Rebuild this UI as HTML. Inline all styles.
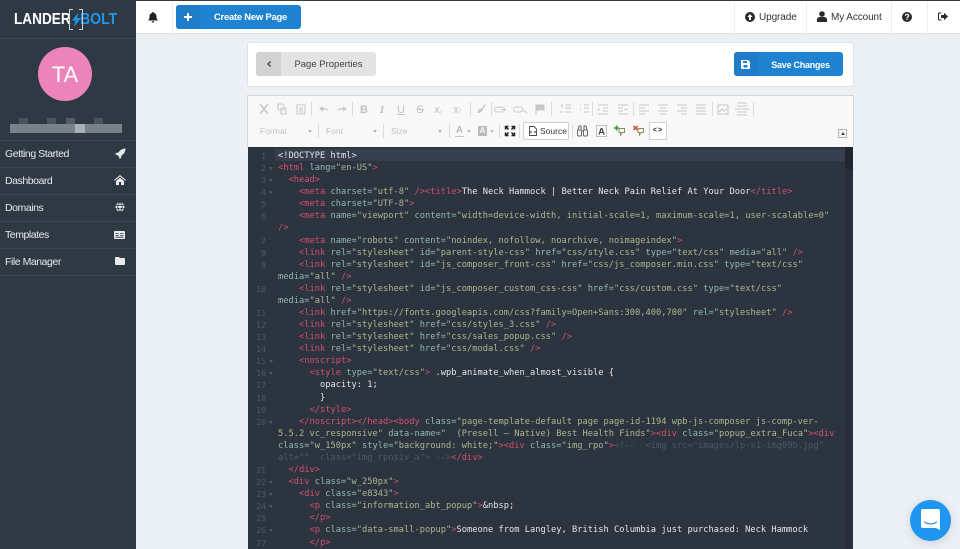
<!DOCTYPE html>
<html lang="en"><head><meta charset="utf-8"><title>Page Editor</title>
<style>
*{box-sizing:border-box}
html,body{margin:0;padding:0;width:960px;height:549px;overflow:hidden;background:#ebf0f5;font-family:"Liberation Sans",sans-serif}
#side{position:absolute;left:0;top:0;width:136px;height:549px;background:#2f3944}
.ln{position:absolute;left:0;width:136px;height:1px;background:#3a4551}
.mi{position:absolute;left:5px;color:#e6e9ec;font-size:10.5px;letter-spacing:-.45px;line-height:12px;white-space:nowrap}
.blur{position:absolute;height:9px;background:#8c939a}
#top{position:absolute;left:136px;top:0;width:824px;height:34px;background:#fff;border-top:1px solid #3a3a3a;border-bottom:1px solid #dfe3e7}
.vs{position:absolute;top:1px;width:1px;height:32px;background:#eceff2}
.tt{position:absolute;font-size:10px;line-height:12px;color:#333;white-space:nowrap;letter-spacing:-.1px}
.btn{position:absolute;border-radius:3px;background:#2083d2;color:#fff;font-weight:bold;font-size:9.5px;height:24px;line-height:24px;text-align:center}
svg{position:absolute;overflow:visible}
#panel{position:absolute;left:247px;top:42px;width:607px;height:45px;background:#fff;border:1px solid #dfe3e7;border-radius:3px}
#tb{position:absolute;left:247px;top:95px;width:607px;height:52px;background:#f8f8f8;border:1px solid #d4d6d8;border-bottom:0}
.sep{position:absolute;width:1px;height:14px;background:#dcdcdc}
.gi{position:absolute;top:103px;color:#c0c0c0;font-size:11px;line-height:14px;width:14px;text-align:center;font-weight:bold}
.dd{position:absolute;top:125px;color:#c2c2c2;font-size:8.5px;line-height:12px}
.ar{position:absolute;top:130px;width:0;height:0;border:2.5px solid transparent;border-top:3px solid #b8b8b8}
#code{position:absolute;left:248px;top:147px;width:605px;height:402px;background:#2c3440;overflow:hidden}
#act{position:absolute;left:27px;top:2px;width:570px;height:12px;background:#373f4e}
#sb{position:absolute;right:0;top:0;width:8px;height:402px;background:#282e39}
#sbt{position:absolute;right:0;top:0;width:8px;height:22px;background:#20252e}
#cl{position:absolute;left:30px;top:3px;width:570px;font-family:"DejaVu Sans Mono",monospace;font-size:8.72px;color:#e4e6e8}
#cl div{height:12.09px;line-height:12.09px;white-space:pre}
#gn{position:absolute;left:0;top:3px;width:26px;font-family:"DejaVu Sans Mono",monospace;font-size:8.2px;color:#4e5967}
#gn div{height:12.09px;line-height:12.09px;white-space:pre;position:relative;padding-left:4px;width:18px;text-align:right}
.f:after{content:"";position:absolute;left:21px;top:5px;border:2px solid transparent;border-top:3px solid #4e5967}
.t{color:#d2506c}.a{color:#93b8b4}.s{color:#a9b98c}.c{color:#4d5866}
#chat{position:absolute;left:910px;top:500px;width:41px;height:41px;border-radius:50%;background:#2196f0;box-shadow:0 2px 10px rgba(0,0,0,.12)}
</style></head><body>
<div id="side">
 <div style="position:absolute;left:14px;top:12px;font-size:16px;font-weight:bold;color:#fff;line-height:16px;white-space:nowrap;transform:scaleX(.85);transform-origin:left">LANDER</div>
 <div style="position:absolute;left:80px;top:12px;font-size:16px;font-weight:bold;color:#2196e8;line-height:16px;white-space:nowrap;transform:scaleX(.88);transform-origin:left">BOLT</div>
 <svg style="left:69px;top:9px" width="14" height="21" viewBox="0 0 14 21"><path d="M4 .5H.5V20.500H4M10 .5H13.500V20.500H10" fill="none" stroke="#cfd3d7" stroke-width="1"/><path d="M10 3 3 11.500H6.500L5 18 12 9H8Z" fill="#2196e8"/></svg>
 <div class="ln" style="top:38px"></div>
 <div style="position:absolute;left:38px;top:47px;width:54px;height:54px;border-radius:50%;background:#ec84bb;color:#fff;font-size:22px;line-height:55px;text-align:center">TA</div>
 <div class="blur" style="left:10px;top:124px;width:112px;background:#79818a"></div>
 <div class="blur" style="left:19px;top:118px;width:9px;height:6px;background:#4a545e"></div>
 <div class="blur" style="left:47px;top:118px;width:9px;height:6px;background:#4a545e"></div>
 <div class="blur" style="left:66px;top:118px;width:9px;height:6px;background:#545e68"></div>
 <div class="blur" style="left:94px;top:118px;width:9px;height:6px;background:#4a545e"></div>
 <div class="blur" style="left:75px;top:124px;width:10px;background:#a9afb4"></div>
 <div class="ln" style="top:140px"></div>
 <div class="ln" style="top:167px"></div><div class="ln" style="top:194px"></div><div class="ln" style="top:221px"></div><div class="ln" style="top:248px"></div><div class="ln" style="top:275px"></div>
 <div class="mi" style="top:148px">Getting Started</div>
 <div class="mi" style="top:175px">Dashboard</div>
 <div class="mi" style="top:202px">Domains</div>
 <div class="mi" style="top:229px">Templates</div>
 <div class="mi" style="top:256px">File Manager</div>
 <svg style="left:115px;top:148px" width="11" height="11" viewBox="0 0 11 11"><path d="M10.500.5C7 .7 5 2 3.500 4.500L1 5l-1 1.500 2 .3 2.200 2.200.3 2L6 10l.5-2.500C9 6 10.300 4 10.500.5Z" fill="#e6e9ec"/></svg>
 <svg style="left:114px;top:175px" width="12" height="10" viewBox="0 0 12 10"><path d="M6 0 0 5l.7.8L6 1.500l5.300 4.300.7-.8ZM2 6v4h3V7h2v3h3V6L6 2.700Z" fill="#e6e9ec"/></svg>
 <svg style="left:115px;top:202px" width="10" height="10" viewBox="0 0 10 10"><circle cx="5" cy="5" r="4.500" fill="#e6e9ec"/><path d="M.5 3.500h9M.5 6.500h9M5 .5c-3 2.500-3 6.500 0 9M5 .5c3 2.500 3 6.500 0 9" stroke="#2f3944" stroke-width=".8" fill="none"/></svg>
 <svg style="left:114px;top:231px" width="11" height="8" viewBox="0 0 11 8"><rect width="11" height="8" rx="1" fill="#e6e9ec"/><path d="M1.500 2.500h3M6 2.500h3.500M1.500 4.500h3M6 4.500h3.500M1.500 6.200h8" stroke="#2f3944" stroke-width=".8"/></svg>
 <svg style="left:115px;top:257px" width="10" height="8" viewBox="0 0 10 8"><path d="M0 1q0-1 1-1h3l1 1h4q1 0 1 1v5q0 1-1 1H1Q0 8 0 7Z" fill="#e6e9ec"/></svg>
</div>

<div id="top">
 <div class="vs" style="left:36px"></div>
 <div class="vs" style="left:598px"></div><div class="vs" style="left:670px"></div><div class="vs" style="left:755px"></div><div class="vs" style="left:791px"></div>
 <svg style="left:12px;top:11px" width="10" height="11" viewBox="0 0 10 11"><path d="M5 0a1 1 0 0 1 1 1c2 .5 2.500 2 2.500 4 0 1.500.5 2.500 1.500 3.500H0C1 7.500 1.500 6.500 1.500 5c0-2 .5-3.500 2.500-4a1 1 0 0 1 1-1ZM3.700 9.300h2.600A1.300 1.300 0 0 1 3.700 9.300Z" fill="#222"/></svg>
 <svg style="left:609px;top:11px" width="10" height="10" viewBox="0 0 10 10"><circle cx="5" cy="5" r="5" fill="#2a2a2a"/><path d="M5 2 2.300 5H4v3h2V5h1.700Z" fill="#fff"/></svg>
 <div class="tt" style="left:623px;top:11px">Upgrade</div>
 <svg style="left:681px;top:10px" width="10" height="11" viewBox="0 0 10 11"><circle cx="5" cy="3" r="2.800" fill="#2a2a2a"/><path d="M0 11V8.500C0 7 1.500 6 3 6h4c1.500 0 3 1 3 2.500V11Z" fill="#2a2a2a"/></svg>
 <div class="tt" style="left:695px;top:11px">My Account</div>
 <svg style="left:766px;top:11px" width="10" height="10" viewBox="0 0 10 10"><circle cx="5" cy="5" r="5" fill="#2a2a2a"/><path d="M3.400 3.800C3.500 2.800 4.200 2.300 5 2.300c1 0 1.700.6 1.700 1.400C6.700 5 5 5 5 6.200" fill="none" stroke="#fff" stroke-width="1.200"/><rect x="4.400" y="6.800" width="1.200" height="1.200" fill="#fff"/></svg>
 <svg style="left:802px;top:11px" width="10" height="9" viewBox="0 0 10 9"><path d="M3.500 1H1.500Q.5 1 .5 2v5q0 1 1 1h2" fill="none" stroke="#2a2a2a" stroke-width="1.100"/><path d="M6 .8 10 4.500 6 8.200V6H3V3h3Z" fill="#2a2a2a"/></svg>
</div>
<div class="btn" style="left:176px;top:5px;width:125px;">
 <div style="position:absolute;left:0;top:0;width:24px;height:24px;background:#1e7cc8;border-radius:3px 0 0 3px"></div>
 <span style="position:absolute;left:24px;right:0;text-align:center;top:1px;letter-spacing:-.27px;white-space:nowrap">Create New Page</span>
 <svg style="left:8px;top:8px" width="8" height="8" viewBox="0 0 8 8"><path d="M4 0v8M0 4h8" stroke="#fff" stroke-width="2"/></svg>
</div>

<div id="panel"></div>
<div style="position:absolute;left:256px;top:52px;width:120px;height:24px;background:#e3e3e3;border-radius:3px;font-size:9.5px;line-height:24px;color:#555">
 <div style="position:absolute;left:0;top:0;width:25px;height:24px;background:#d2d2d2;border-radius:3px 0 0 3px"></div>
 <svg style="left:11px;top:9px" width="4" height="6" viewBox="0 0 4 6"><path d="M3.500.5 1 3l2.500 2.500" fill="none" stroke="#444" stroke-width="1.300"/></svg>
 <span style="position:absolute;left:25px;right:0;top:1px;text-align:center;font-weight:normal;color:#444">Page Properties</span>
</div>
<div class="btn" style="left:734px;top:52px;width:109px">
 <div style="position:absolute;left:0;top:0;width:24px;height:24px;background:#1e7cc8;border-radius:3px 0 0 3px"></div>
 <span style="position:absolute;left:24px;right:0;text-align:center;top:1px;font-size:9px;letter-spacing:-.25px;white-space:nowrap">Save Changes</span>
 <svg style="left:7px;top:8px" width="9" height="9" viewBox="0 0 9 9"><path d="M0 1q0-1 1-1h6l2 2v6q0 1-1 1H1Q0 9 0 8Z" fill="#fff"/><rect x="2" y="1" width="4" height="2" fill="#1e7cc8"/><rect x="2.500" y="5" width="4" height="2.500" fill="#1e7cc8"/></svg>
</div>

<div id="tb"></div>
<!-- toolbar row 1 -->
<svg style="left:248px;top:100px" width="600" height="20" viewBox="248 100 600 20" fill="none" stroke="#c8c8c8" stroke-width="1.100">
 <path d="M260 104l8 10M268 104l-8 10" stroke-width="1.500"/>
 <path d="M278 104h4l2 2v4h-6ZM281 108h5v6h-5Z"/>
 <path d="M297 105h8v9h-8ZM299 108h4M299 110h4M299 112h4"/>
 <path d="M319 109l4-3v2c3 0 5 1 6 3-2-1-3-1.500-6-1.500v2ZM347 109l-4-3v2c-3 0-5 1-6 3 2-1 3-1.500 6-1.500v2Z" fill="#c8c8c8" stroke="none"/>
 <path d="M485 104l-3 4-3 1-2 4c3 0 4-.5 5-2l1-2 3-4Z" fill="#c8c8c8" stroke="none"/>
 <path d="M497 107h5a2 2 0 0 1 0 5h-5a2 2 0 0 1 0-5ZM501 109.500h5" stroke-width="1"/>
 <path d="M516 107h4a2 2 0 0 1 0 5h-4a2 2 0 0 1 0-5ZM523 110l4 3" stroke-width="1"/>
 <path d="M536 105v9M536 105h8v5h-8Z" fill="#c8c8c8"/>
 <path d="M561 105h1v3M560 112h3M565 105h6M565 108h6M565 112h6M580 105h1M580 110h1M584 105h5M584 108h5M584 112h5" />
 <path d="M598 105h10M603 108h5M603 111h5M598 114h10M597 109.500h3M618 105h10M618 108h5M618 111h5M618 114h10M624 109.500h4" />
 <path d="M639 105h10M639 108h6M639 111h10M639 114h6M658 105h10M660 108h6M658 111h10M660 114h6M677 105h10M681 108h6M677 111h10M681 114h6M696 105h10M696 108h10M696 111h10M696 114h10"/>
 <path d="M718 105h10v9h-10ZM719 112l3-3 2 2 3-2" />
 <path d="M737 103h10M737 106h10M735 109h14M737 112h10M737 115h10"/>
</svg>
<div class="gi" style="left:357px;font-family:'Liberation Sans',sans-serif">B</div>
<div class="gi" style="left:375px;font-style:italic;font-family:'Liberation Serif',serif">I</div>
<div class="gi" style="left:394px;text-decoration:underline;font-weight:normal">U</div>
<div class="gi" style="left:413px;text-decoration:line-through;font-weight:normal">S</div>
<div class="gi" style="left:431px;font-weight:normal">x<span style="font-size:6px">₂</span></div>
<div class="gi" style="left:450px;font-weight:normal">x<span style="font-size:6px">²</span></div>
<div class="sep" style="left:311px;top:102px"></div><div class="sep" style="left:352px;top:102px"></div><div class="sep" style="left:470px;top:102px"></div><div class="sep" style="left:491px;top:102px"></div><div class="sep" style="left:551px;top:102px"></div><div class="sep" style="left:592px;top:102px"></div><div class="sep" style="left:633px;top:102px"></div><div class="sep" style="left:712px;top:102px"></div><div class="sep" style="left:753px;top:102px"></div>
<!-- row 2 -->
<div class="dd" style="left:260px">Format</div><div class="ar" style="left:308px"></div><div class="sep" style="left:318px;top:124px"></div>
<div class="dd" style="left:326px">Font</div><div class="ar" style="left:373px"></div><div class="sep" style="left:383px;top:124px"></div>
<div class="dd" style="left:391px">Size</div><div class="ar" style="left:438px"></div><div class="sep" style="left:449px;top:124px"></div>
<div style="position:absolute;left:455px;top:125px;font-size:10px;line-height:11px;color:#a8a8a8;border-bottom:1px solid #c4c4c4;width:9px;text-align:center">A</div><div class="ar" style="left:467px"></div>
<div style="position:absolute;left:478px;top:126px;width:9px;height:10px;background:#bcbcbc;color:#f8f8f8;font-size:8px;line-height:10px;text-align:center;font-weight:bold">A</div><div class="ar" style="left:490px"></div>
<div class="sep" style="left:499px;top:124px"></div>
<svg style="left:505px;top:126px" width="10" height="10" viewBox="0 0 10 10" fill="none" stroke="#222" stroke-width="1.500"><path d="M.5 3.500V.5h3M9.500 3.500V.5h-3M.5 6.500v3h3M9.500 6.500v3h-3M1 1l2.500 2.500M9 1 6.500 3.500M1 9l2.500-2.500M9 9 6.500 6.500"/></svg>
<div class="sep" style="left:519px;top:124px"></div>
<div style="position:absolute;left:523px;top:122px;width:46px;height:18px;background:#fff;border:1px solid #d0d0d0;border-radius:2px;font-size:8.5px;line-height:17px;color:#333;padding-left:16px">Source</div>
<svg style="left:529px;top:126px" width="8" height="10" viewBox="0 0 8 10" fill="none" stroke="#444" stroke-width=".9"><path d="M.5.500h4.500l2.500 2.500v6.500h-7ZM2.500 5l-1 1 1 1M5.500 5l1 1-1 1"/></svg>
<div class="sep" style="left:572px;top:124px"></div>
<svg style="left:577px;top:125px" width="11" height="12" viewBox="0 0 11 12" fill="none" stroke="#666" stroke-width="1"><path d="M1 5l1-4h2v4M10 5 9 1H7v4M4 6h3"/><rect x=".5" y="5" width="4" height="6" rx="1"/><rect x="6.500" y="5" width="4" height="6" rx="1"/></svg>
<svg style="left:596px;top:125px" width="11" height="12" viewBox="0 0 11 12"><rect x=".5" y=".5" width="10" height="11" fill="none" stroke="#888" stroke-dasharray="1 1"/><text x="5.500" y="9.500" font-family="Liberation Sans" font-weight="bold" font-size="9.500" text-anchor="middle" fill="#444">A</text></svg>
<svg style="left:614px;top:125px" width="12" height="12" viewBox="0 0 12 12" fill="none"><path d="M5 3.500h5.500v4H8L6.500 10V7.500H5Z" stroke="#8a8a5a" stroke-width="1"/><path d="M2.500.5v5M0 3h5" stroke="#2a9a3a" stroke-width="1.500"/></svg>
<svg style="left:633px;top:125px" width="12" height="12" viewBox="0 0 12 12" fill="none"><path d="M5 3.500h5.500v4H8L6.500 10V7.500H5Z" stroke="#8a8a5a" stroke-width="1"/><path d="M.5 1l4 4M4.500 1l-4 4" stroke="#e0442a" stroke-width="1.500"/></svg>
<div style="position:absolute;left:649px;top:122px;width:18px;height:18px;background:#fff;border:1px solid #d0d0d0;font-family:'Liberation Mono',monospace;font-size:7px;font-weight:bold;letter-spacing:1px;line-height:17px;text-align:center;color:#222">&lt;&gt;</div>
<div style="position:absolute;left:838px;top:129px;width:9px;height:9px;background:#f4f4f4;border:1px solid #b4b4b4"></div>
<div style="position:absolute;left:840.500px;top:132px;border:2px solid transparent;border-bottom:3px solid #444;border-top:0"></div>

<div id="code">
 <div id="act"></div><div id="sb"></div><div id="sbt"></div>
 <div id="gn">
<div>1</div><div class="f">2</div><div class="f">3</div><div class="f">4</div><div>5</div><div>6</div><div> </div><div>7</div><div>8</div><div>9</div><div> </div><div>10</div><div> </div><div>11</div><div>12</div><div>13</div><div>14</div><div class="f">15</div><div class="f">16</div><div>17</div><div>18</div><div>19</div><div class="f">20</div><div> </div><div> </div><div> </div><div>21</div><div class="f">22</div><div class="f">23</div><div class="f">24</div><div>25</div><div class="f">26</div><div>27</div>
 </div>
 <div id="cl">
<div>&lt;!DOCTYPE html&gt;</div>
<div><span class="t">&lt;html</span> <span class="a">lang=</span><span class="s">"en-US"</span><span class="t">&gt;</span></div>
<div>  <span class="t">&lt;head&gt;</span></div>
<div>    <span class="t">&lt;meta</span> <span class="a">charset=</span><span class="s">"utf-8"</span> <span class="t">/&gt;&lt;title&gt;</span>The Neck Hammock | Better Neck Pain Relief At Your Door<span class="t">&lt;/title&gt;</span></div>
<div>    <span class="t">&lt;meta</span> <span class="a">charset=</span><span class="s">"UTF-8"</span><span class="t">&gt;</span></div>
<div>    <span class="t">&lt;meta</span> <span class="a">name=</span><span class="s">"viewport"</span> <span class="a">content=</span><span class="s">"width=device-width, initial-scale=1, maximum-scale=1, user-scalable=0"</span></div>
<div><span class="t">/&gt;</span></div>
<div>    <span class="t">&lt;meta</span> <span class="a">name=</span><span class="s">"robots"</span> <span class="a">content=</span><span class="s">"noindex, nofollow, noarchive, noimageindex"</span><span class="t">&gt;</span></div>
<div>    <span class="t">&lt;link</span> <span class="a">rel=</span><span class="s">"stylesheet"</span> <span class="a">id=</span><span class="s">"parent-style-css"</span> <span class="a">href=</span><span class="s">"css/style.css"</span> <span class="a">type=</span><span class="s">"text/css"</span> <span class="a">media=</span><span class="s">"all"</span> <span class="t">/&gt;</span></div>
<div>    <span class="t">&lt;link</span> <span class="a">rel=</span><span class="s">"stylesheet"</span> <span class="a">id=</span><span class="s">"js_composer_front-css"</span> <span class="a">href=</span><span class="s">"css/js_composer.min.css"</span> <span class="a">type=</span><span class="s">"text/css"</span></div>
<div><span class="a">media=</span><span class="s">"all"</span> <span class="t">/&gt;</span></div>
<div>    <span class="t">&lt;link</span> <span class="a">rel=</span><span class="s">"stylesheet"</span> <span class="a">id=</span><span class="s">"js_composer_custom_css-css"</span> <span class="a">href=</span><span class="s">"css/custom.css"</span> <span class="a">type=</span><span class="s">"text/css"</span></div>
<div><span class="a">media=</span><span class="s">"all"</span> <span class="t">/&gt;</span></div>
<div>    <span class="t">&lt;link</span> <span class="a">href=</span><span class="s">"https://fonts.googleapis.com/css?family=Open+Sans:300,400,700"</span> <span class="a">rel=</span><span class="s">"stylesheet"</span> <span class="t">/&gt;</span></div>
<div>    <span class="t">&lt;link</span> <span class="a">rel=</span><span class="s">"stylesheet"</span> <span class="a">href=</span><span class="s">"css/styles_3.css"</span> <span class="t">/&gt;</span></div>
<div>    <span class="t">&lt;link</span> <span class="a">rel=</span><span class="s">"stylesheet"</span> <span class="a">href=</span><span class="s">"css/sales_popup.css"</span> <span class="t">/&gt;</span></div>
<div>    <span class="t">&lt;link</span> <span class="a">rel=</span><span class="s">"stylesheet"</span> <span class="a">href=</span><span class="s">"css/modal.css"</span> <span class="t">/&gt;</span></div>
<div>    <span class="t">&lt;noscript&gt;</span></div>
<div>      <span class="t">&lt;style</span> <span class="a">type=</span><span class="s">"text/css"</span><span class="t">&gt;</span> .wpb_animate_when_almost_visible {</div>
<div>        opacity: 1;</div>
<div>        }</div>
<div>      <span class="t">&lt;/style&gt;</span></div>
<div>    <span class="t">&lt;/noscript&gt;&lt;/head&gt;&lt;body</span> <span class="a">class=</span><span class="s">"page-template-default page page-id-1194 wpb-js-composer js-comp-ver-</span></div>
<div><span class="s">5.5.2 vc_responsive"</span> <span class="a">data-name=</span><span class="s">"  (Presell — Native) Best Health Finds"</span><span class="t">&gt;&lt;div</span> <span class="a">class=</span><span class="s">"popup_extra_Fuca"</span><span class="t">&gt;&lt;div</span></div>
<div><span class="a">class=</span><span class="s">"w_150px"</span> <span class="a">style=</span><span class="s">"background: white;"</span><span class="t">&gt;&lt;div</span> <span class="a">class=</span><span class="s">"img_rpo"</span><span class="t">&gt;</span><span class="c">&lt;!--  &lt;img src="images/lp-s1-img09b.jpg"</span></div>
<div><span class="c">alt=""  class="img_rpnsiv_a"&gt; --&gt;</span><span class="t">&lt;/div&gt;</span></div>
<div>  <span class="t">&lt;/div&gt;</span></div>
<div>  <span class="t">&lt;div</span> <span class="a">class=</span><span class="s">"w_250px"</span><span class="t">&gt;</span></div>
<div>    <span class="t">&lt;div</span> <span class="a">class=</span><span class="s">"e8343"</span><span class="t">&gt;</span></div>
<div>      <span class="t">&lt;p</span> <span class="a">class=</span><span class="s">"information_abt_popup"</span><span class="t">&gt;</span>&amp;nbsp;</div>
<div>      <span class="t">&lt;/p&gt;</span></div>
<div>      <span class="t">&lt;p</span> <span class="a">class=</span><span class="s">"data-small-popup"</span><span class="t">&gt;</span>Someone from Langley, British Columbia just purchased: Neck Hammock</div>
<div>      <span class="t">&lt;/p&gt;</span></div>
 </div>
</div>

<div id="chat">
 <svg style="left:11px;top:9px" width="19" height="21" viewBox="0 0 19 21"><path d="M2 0h15q2 0 2 2v19l-4-2H2q-2 0-2-2V2q0-2 2-2Z" fill="#fff"/><path d="M3.500 13c3.500 2.500 8.500 2.500 12 0" fill="none" stroke="#2196f0" stroke-width="1.200" stroke-linecap="round"/></svg>
</div>
</body></html>
